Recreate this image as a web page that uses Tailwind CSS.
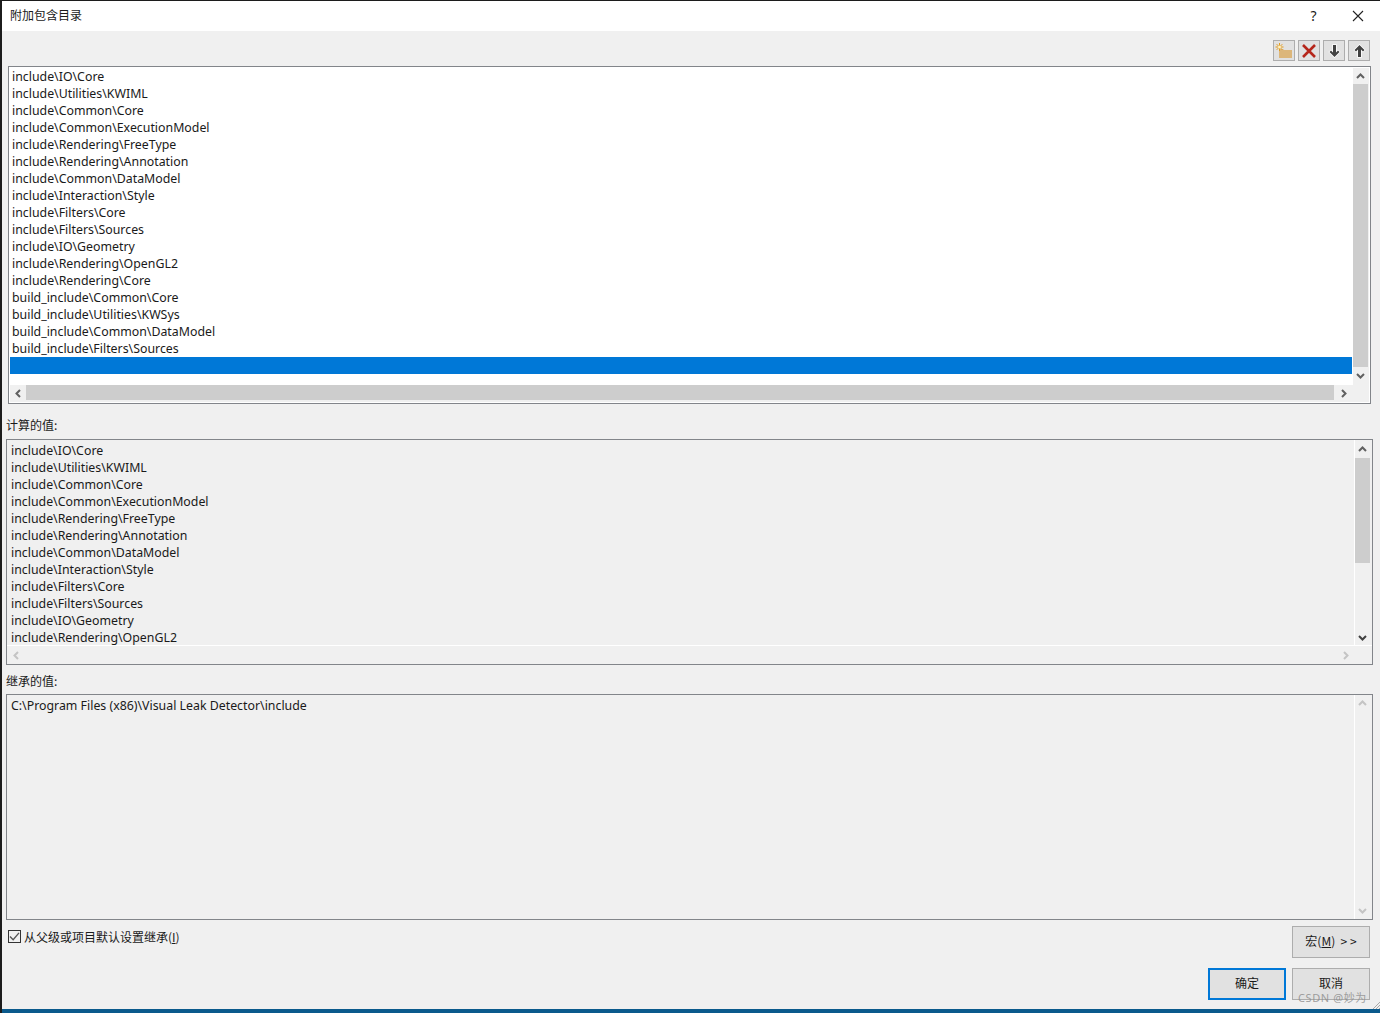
<!DOCTYPE html>
<html lang="zh-CN">
<head>
  <meta charset="UTF-8">
  <title>附加包含目录</title>
  <script src="https://cdn.jsdelivr.net/npm/@tailwindcss/browser@4"></script>
</head>
<body class="w-[1380px] h-[1013px] overflow-hidden bg-[#1c1c1c] font-['Noto_Sans','Noto_Sans_CJK_SC',sans-serif] text-[12.35px] text-[#1a1a1a]">
  <div class="relative ml-[2px] mt-px w-[1378px] h-[1008px] flex flex-col bg-[#f0f0f0]">

    <!-- Title bar -->
    <header class="h-[30px] bg-white flex items-center pl-2 shrink-0">
      <span class="text-[12px] pb-[2px] font-['Noto_Sans_CJK_SC',sans-serif]">附加包含目录</span>
      <span class="ml-auto w-[45px] text-center text-[14px] pl-[2px] pb-[2px]">?</span>
      <button class="w-[45px] h-[30px] flex items-center justify-center">
        <svg width="12" height="12" viewBox="0 0 12 12" fill="none" stroke="#222" stroke-width="1.1"><path d="M1 1l10 10M11 1L1 11"/></svg>
      </button>
    </header>

    <!-- Toolbar -->
    <div class="h-[35px] shrink-0 flex justify-end gap-[3px] pt-[9px] pr-[10px]">
      <button class="w-[22px] h-[21px] bg-[#e1e1e1] border border-[#adadad] flex items-center justify-center">
        <svg width="18" height="16" viewBox="0 0 18 16"><path d="M4 6h4l1 1h8v8H4z" fill="#dcb67a"/><path d="M4.500 0v8M.5 4h8M1.700 1.200l5.600 5.600M7.300 1.200L1.700 6.800" stroke="#e39a1c" stroke-width="1"/><circle cx="4.500" cy="4" r="1.500" fill="#fff3c0"/></svg>
      </button>
      <button class="w-[22px] h-[21px] bg-[#e1e1e1] border border-[#adadad] flex items-center justify-center">
        <svg width="16" height="16" viewBox="0 0 16 16" fill="none" stroke="#b5261b" stroke-width="2.600"><path d="M2 2l12 12M14 2L2 14"/></svg>
      </button>
      <button class="w-[22px] h-[21px] bg-[#e1e1e1] border border-[#adadad] flex items-center justify-center">
        <svg width="13" height="14" viewBox="0 0 13 14"><path d="M6.500 13L1.500 8 3 6.500 5 8.500V1h3v7.500l2-2L11.500 8z" fill="#424242" stroke="#fff" stroke-width="1.500" paint-order="stroke"/></svg>
      </button>
      <button class="w-[22px] h-[21px] bg-[#e1e1e1] border border-[#adadad] flex items-center justify-center">
        <svg width="13" height="14" viewBox="0 0 13 14"><path d="M6.500 1L1.500 6 3 7.500 5 5.500V13h3V5.500l2 2L11.500 6z" fill="#424242" stroke="#fff" stroke-width="1.500" paint-order="stroke"/></svg>
      </button>
    </div>

    <!-- Editable list -->
    <section class="ml-1.5 w-[1363px] h-[338px] shrink-0 border border-[#82858a] bg-white p-px flex flex-col">
      <div class="flex h-[318px]">
        <ul class="w-[1343px] leading-[17px] whitespace-nowrap">
          <li class="h-[17px] pl-[2px]">include\IO\Core</li>
          <li class="h-[17px] pl-[2px]">include\Utilities\KWIML</li>
          <li class="h-[17px] pl-[2px]">include\Common\Core</li>
          <li class="h-[17px] pl-[2px]">include\Common\ExecutionModel</li>
          <li class="h-[17px] pl-[2px]">include\Rendering\FreeType</li>
          <li class="h-[17px] pl-[2px]">include\Rendering\Annotation</li>
          <li class="h-[17px] pl-[2px]">include\Common\DataModel</li>
          <li class="h-[17px] pl-[2px]">include\Interaction\Style</li>
          <li class="h-[17px] pl-[2px]">include\Filters\Core</li>
          <li class="h-[17px] pl-[2px]">include\Filters\Sources</li>
          <li class="h-[17px] pl-[2px]">include\IO\Geometry</li>
          <li class="h-[17px] pl-[2px]">include\Rendering\OpenGL2</li>
          <li class="h-[17px] pl-[2px]">include\Rendering\Core</li>
          <li class="h-[17px] pl-[2px]">build_include\Common\Core</li>
          <li class="h-[17px] pl-[2px]">build_include\Utilities\KWSys</li>
          <li class="h-[17px] pl-[2px]">build_include\Common\DataModel</li>
          <li class="h-[17px] pl-[2px]">build_include\Filters\Sources</li>
          <li class="h-[17px] w-[1342px] bg-[#0078d7]"></li>
        </ul>
        <div class="w-[16px] bg-[#f0f0f0] pr-px flex flex-col">
          <div class="h-[16px] flex items-center justify-center">
            <svg width="9" height="6" viewBox="0 0 9 6" fill="none" stroke="#606060" stroke-width="2"><path d="M1 5l3.500-3.500L8 5"/></svg>
          </div>
          <div class="h-[283px] bg-[#cdcdcd]"></div>
          <div class="flex-1 flex items-center justify-center">
            <svg width="9" height="6" viewBox="0 0 9 6" fill="none" stroke="#606060" stroke-width="2"><path d="M1 1l3.500 3.500L8 1"/></svg>
          </div>
        </div>
      </div>
      <div class="h-[17px] bg-[#f0f0f0] flex">
        <div class="w-[16px] flex items-center justify-center">
          <svg width="6" height="9" viewBox="0 0 6 9" fill="none" stroke="#606060" stroke-width="2"><path d="M5 1L1.500 4.500 5 8"/></svg>
        </div>
        <div class="w-[1308px] h-[15px] bg-[#cdcdcd]"></div>
        <div class="w-[20px] flex items-center justify-center">
          <svg width="6" height="9" viewBox="0 0 6 9" fill="none" stroke="#606060" stroke-width="2"><path d="M1 1l3.500 3.500L1 8"/></svg>
        </div>
      </div>
    </section>

    <!-- Evaluated value -->
    <label class="ml-1 h-[35px] shrink-0 flex items-center pt-[7px] text-[12px] font-['Noto_Sans_CJK_SC',sans-serif]">计算的值:</label>
    <section class="ml-1 w-[1367px] h-[226px] shrink-0 border border-[#82858a] flex flex-col">
      <div class="flex h-[206px] border-b border-white">
        <ul class="flex-1 overflow-hidden pl-1 pt-[2px] leading-[17px] whitespace-nowrap border-r border-white">
          <li class="h-[17px]">include\IO\Core</li>
          <li class="h-[17px]">include\Utilities\KWIML</li>
          <li class="h-[17px]">include\Common\Core</li>
          <li class="h-[17px]">include\Common\ExecutionModel</li>
          <li class="h-[17px]">include\Rendering\FreeType</li>
          <li class="h-[17px]">include\Rendering\Annotation</li>
          <li class="h-[17px]">include\Common\DataModel</li>
          <li class="h-[17px]">include\Interaction\Style</li>
          <li class="h-[17px]">include\Filters\Core</li>
          <li class="h-[17px]">include\Filters\Sources</li>
          <li class="h-[17px]">include\IO\Geometry</li>
          <li class="h-[17px]">include\Rendering\OpenGL2</li>
        </ul>
        <div class="w-[17px] pr-[2px] flex flex-col">
          <div class="h-[18px] flex items-center justify-center">
            <svg width="9" height="6" viewBox="0 0 9 6" fill="none" stroke="#606060" stroke-width="2"><path d="M1 5l3.500-3.500L8 5"/></svg>
          </div>
          <div class="h-[105px] bg-[#cdcdcd]"></div>
          <div class="flex-1 flex items-end justify-center pb-[4px]">
            <svg width="9" height="6" viewBox="0 0 9 6" fill="none" stroke="#404040" stroke-width="2"><path d="M1 1l3.500 3.500L8 1"/></svg>
          </div>
        </div>
      </div>
      <div class="flex-1 flex items-center justify-between pl-[6px] pr-[23px]">
        <svg width="6" height="9" viewBox="0 0 6 9" fill="none" stroke="#c4c4c4" stroke-width="2"><path d="M5 1L1.500 4.500 5 8"/></svg>
        <svg width="6" height="9" viewBox="0 0 6 9" fill="none" stroke="#c4c4c4" stroke-width="2"><path d="M1 1l3.500 3.500L1 8"/></svg>
      </div>
    </section>

    <!-- Inherited value -->
    <label class="ml-1 h-[29px] shrink-0 flex items-center pt-[2px] text-[12px] font-['Noto_Sans_CJK_SC',sans-serif]">继承的值:</label>
    <section class="ml-1 w-[1367px] h-[226px] shrink-0 border border-[#82858a] flex">
      <p class="flex-1 pl-1 pt-[2px] leading-[17px] border-r border-white">C:\Program Files (x86)\Visual Leak Detector\include</p>
      <div class="w-[17px] pr-[2px] flex flex-col justify-between items-center py-[5px]">
        <svg width="9" height="6" viewBox="0 0 9 6" fill="none" stroke="#c4c4c4" stroke-width="2"><path d="M1 5l3.500-3.500L8 5"/></svg>
        <svg width="9" height="6" viewBox="0 0 9 6" fill="none" stroke="#c4c4c4" stroke-width="2"><path d="M1 1l3.500 3.500L8 1"/></svg>
      </div>
    </section>

    <!-- Footer -->
    <div class="flex-1 flex items-start pl-1.5 pr-[10px] font-['Noto_Sans_CJK_SC',sans-serif] text-[12px]">
      <label class="flex items-center gap-[3px] mt-[10px] h-[13px]">
        <span class="w-[13px] h-[13px] border border-[#333] bg-[#f0f0f0] flex items-center justify-center">
          <svg width="11" height="9" viewBox="0 0 12 10" fill="none" stroke="#555" stroke-width="1.500"><path d="M1 5l3.500 3.500L11 1"/></svg>
        </span>
        <span>从父级或项目默认设置继承(<u>I</u>)</span>
      </label>
      <div class="ml-auto flex flex-col items-end gap-2.5 mt-1.5">
        <button class="w-[78px] h-8 pb-[2px] bg-[#e1e1e1] border border-[#adadad] whitespace-pre">宏(<u>M</u>)  &gt; &gt;</button>
        <div class="flex gap-1.5">
          <button class="w-[78px] h-8 pb-[2px] bg-[#e1e1e1] border-2 border-[#0078d7]">确定</button>
          <button class="w-[78px] h-8 pb-[2px] bg-[#e1e1e1] border border-[#adadad]">取消</button>
        </div>
      </div>
    </div>

    <!-- Watermark and resize grip lie over the dialog -->
    <span class="absolute left-[1296px] top-[989px] text-[11px] leading-4 text-[#8a8a8a]/80 tracking-[0.6px]">CSDN @妙为</span>
    <svg class="absolute right-0 bottom-0" width="8" height="8" viewBox="0 0 8 8" stroke="#a8a8a8"><path d="M8 1L1 8M8 4L4 8M8 7L7 8"/></svg>
  </div>
  <div class="h-1 ml-[2px] bg-[#0a5a8c]"></div>
</body>
</html>
